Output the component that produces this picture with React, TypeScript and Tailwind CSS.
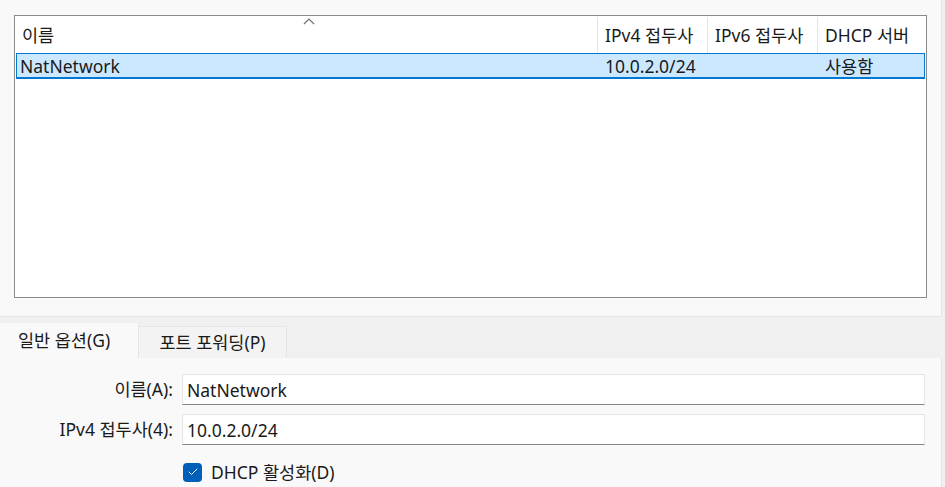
import { Check } from "lucide-react";

const FONT = { fontFamily: '"Noto Sans", "Noto Sans CJK KR", sans-serif' };

const COLUMNS = [
  { label: "이름", width: "w-[582px]" },
  { label: "IPv4 접두사", width: "w-[110px]" },
  { label: "IPv6 접두사", width: "w-[110px]" },
  { label: "DHCP 서버", width: "flex-1" },
];

function NetworkTable() {
  return (
    <div className="mx-[14px] mt-[15px] h-[283px] border border-[#8a8a8a] bg-white flex flex-col">
      {/* Header */}
      <div className="relative h-[37px] flex shrink-0 pt-[1px]">
        {COLUMNS.map((c, i) => (
          <div
            key={c.label}
            className={`${c.width} flex items-center pl-[7px] whitespace-nowrap ${i > 0 ? "border-l border-[#e5e5e5]" : ""}`}
          >
            {c.label}
          </div>
        ))}
        <svg className="absolute left-[288px] top-[2px]" width="12" height="7" viewBox="0 0 12 7">
          <path d="M1 6 L6 1 L11 6" fill="none" stroke="#707070" strokeWidth="1.2" />
        </svg>
      </div>

      {/* Selected row */}
      <div className="mx-[1px] h-[26px] flex items-center bg-[#cce8ff] border border-[#0078d4] border-b-2 pt-[1px] whitespace-nowrap">
        <div className="w-[581px] pl-[3px]">NatNetwork</div>
        <div className="w-[110px] pl-[7px]">10.0.2.0/24</div>
        <div className="w-[110px]"></div>
        <div className="flex-1 pl-[7px]">사용함</div>
      </div>
    </div>
  );
}

function Field({ label, value }: { label: string; value: string }) {
  return (
    <div className="flex items-center h-[31px]">
      <div className="w-[174px] text-right pr-[1px] whitespace-nowrap">{label}</div>
      <div className="ml-[8px] w-[743px] h-[31px] bg-white border border-[#e5e5e5] border-b-[#868686] flex items-center pl-[4px] pt-[1px]">
        {value}
      </div>
    </div>
  );
}

export default function App() {
  return (
    <div className="w-[945px] h-[487px] bg-[#f0f0f0] text-[17.5px] text-[#1a1a1a] overflow-hidden flex flex-col" style={FONT}>
      {/* Top panel */}
      <div className="w-[942px] h-[317px] bg-[#f9f9f9] border-r border-b border-[#e5e5e5] shrink-0">
        <NetworkTable />
      </div>

      {/* Tabs */}
      <div className="h-[41px] flex items-end shrink-0">
        <div className="w-[139px] h-[35px] bg-[#f9f9f9] border-r border-[#e5e5e5] flex items-center pl-[18px] whitespace-nowrap">
          일반 옵션(G)
        </div>
        <div className="w-[148px] h-[32px] bg-[#f3f3f3] border-t border-r border-[#e5e5e5] flex items-center justify-center whitespace-nowrap">
          포트 포워딩(P)
        </div>
      </div>

      {/* Options panel */}
      <div className="w-[942px] flex-1 bg-[#f9f9f9] border-r border-[#e5e5e5] pt-[16px] flex flex-col gap-[9px]">
        <Field label="이름(A):" value="NatNetwork" />
        <Field label="IPv4 접두사(4):" value="10.0.2.0/24" />
        <div className="flex items-center ml-[183px] mt-[5px] gap-[9px]">
          <div className="w-[19px] h-[19px] rounded-[4px] bg-[#005fb8] flex items-center justify-center">
            <Check className="w-[12px] h-[12px] text-white" strokeWidth={2} />
          </div>
          <span className="whitespace-nowrap">DHCP 활성화(D)</span>
        </div>
      </div>
    </div>
  );
}
